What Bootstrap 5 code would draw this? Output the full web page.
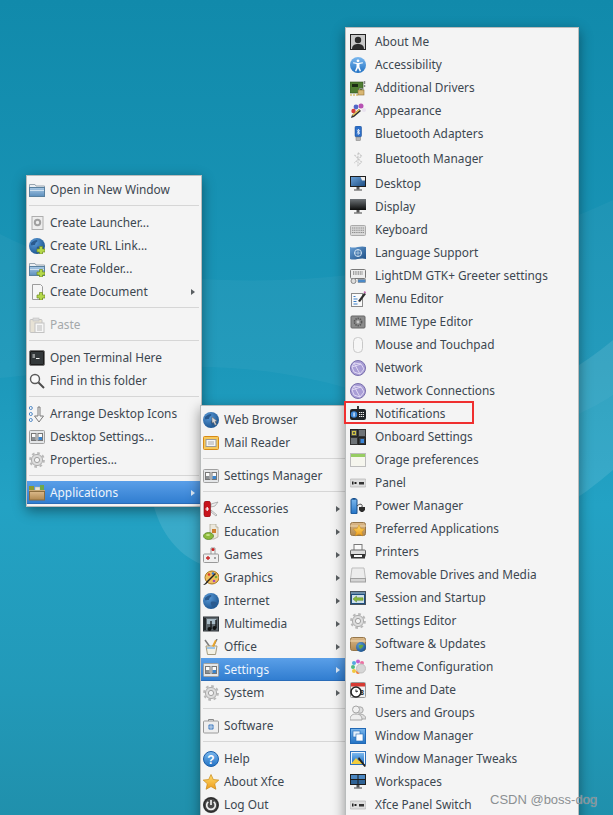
<!DOCTYPE html>
<html lang="en">
<head>
<meta charset="utf-8">
<title>Xfce desktop menu</title>
<link href="https://cdn.jsdelivr.net/npm/bootstrap@5.3.0/dist/css/bootstrap.min.css" rel="stylesheet">
<style>
html,body{height:815px;overflow:hidden}
body{margin:0;background:linear-gradient(180deg,#118aab 0,#1c98ba 45%,#23a2c4 62%,#2299b8 85%,#2090ac 100%);font-family:"Noto Sans",sans-serif;font-size:11.85px;color:#3c4750}
.desk{position:relative;width:613px;height:815px;overflow:hidden}
.wall{position:absolute;left:0;top:0}
.win{position:absolute;background:#f4f4f4;border:1px solid #b9bcbc;padding:2px 0;box-shadow:0 4px 12px rgba(0,0,0,.42)}
.w1{left:26px;top:175px;width:176px;z-index:1;--lead:2px;--gap:5px;--tail:6px}
.w2{left:200px;top:405px;width:148px;height:430px;z-index:2;--lead:2px;--gap:5px;--tail:7px}
.w3{left:345px;top:27px;width:234px;height:810px;z-index:3;--lead:4px;--gap:9px;--tail:7px}
.ent{height:23px;padding-left:var(--lead);padding-right:var(--tail);white-space:nowrap;position:relative}
.ent.tall{height:27px}
.ent svg{width:16px;height:16px;flex:none;overflow:visible;margin-right:var(--gap)}
.ent.off{color:#a4a8aa}
.ent.off svg{opacity:.45}
.ent.sel{background:linear-gradient(180deg,#5a9fe8,#2f7ccf);color:#eef5fc;box-shadow:inset 0 -1px #2a6cb8}
.arw{width:0;height:0;border-left:4px solid #5a5f62;border-top:3px solid transparent;border-bottom:3px solid transparent}
.sel .arw{border-left-color:#dce9f7}
.rule{height:1px;background:#d6d6d6;margin:4px 2px 5px 2px}
.mark-box{position:absolute;left:-2px;top:-1px;width:130px;height:23px;border:2px solid #ef2f2f;pointer-events:none}
.stamp{position:absolute;left:490px;top:790px;z-index:5;font-family:"Liberation Sans",sans-serif;font-size:13px;color:#8b8f92;text-shadow:0 0 1px rgba(255,255,255,.45);white-space:nowrap}
.defs{width:0;height:0;display:block}
</style>
</head>
<body>
<svg class="defs" xmlns="http://www.w3.org/2000/svg">
<defs>
<linearGradient id="gb" x1="0" y1="0" x2="0" y2="1"><stop offset="0" stop-color="#a9c8e4"/><stop offset="1" stop-color="#5d8fbd"/></linearGradient>
<radialGradient id="gg" cx=".35" cy=".3" r=".8"><stop offset="0" stop-color="#5b9bd8"/><stop offset="1" stop-color="#174f8a"/></radialGradient>
<linearGradient id="gs" x1="0" y1="0" x2="0" y2="1"><stop offset="0" stop-color="#e2e2e2"/><stop offset="1" stop-color="#b4b4b4"/></linearGradient>
<linearGradient id="gm" x1="0" y1="0" x2="0" y2="1"><stop offset="0" stop-color="#6f7478"/><stop offset="1" stop-color="#0c0c0c"/></linearGradient>
<linearGradient id="gd" x1="0" y1="0" x2="1" y2="1"><stop offset="0" stop-color="#6aa0d6"/><stop offset="1" stop-color="#1e4f85"/></linearGradient>
<linearGradient id="gh" x1="0" y1="0" x2="0" y2="1"><stop offset="0" stop-color="#7bb8ee"/><stop offset="1" stop-color="#2272c4"/></linearGradient>
<linearGradient id="gt" x1="0" y1="0" x2="0" y2="1"><stop offset="0" stop-color="#dbb98a"/><stop offset="1" stop-color="#b08850"/></linearGradient>
<linearGradient id="gy" x1="0" y1="0" x2="0" y2="1"><stop offset="0" stop-color="#ffdc6a"/><stop offset="1" stop-color="#ee9c1d"/></linearGradient>
<symbol id="plus" viewBox="0 0 16 16"><path d="M10.500 8.500h3v2.500H16v3h-2.500V16h-3v-2H8v-3h2.500z" fill="#b4d84a" stroke="#6d8a22" stroke-width=".7"/></symbol>
<symbol id="folder" viewBox="0 0 16 16"><path d="M.5 2.500h5.500l1 1.500h8.500v2H.5z" fill="#eceff2" stroke="#98a5b0"/><rect x=".5" y="5.500" width="15" height="9" fill="url(#gb)" stroke="#59809f"/><rect x="1" y="8" width="14" height="1" fill="#cfe0ef"/></symbol>
<symbol id="launch" viewBox="0 0 16 16"><rect x="3" y="1.500" width="11" height="13" fill="#ededed" stroke="#aeaeae"/><circle cx="8.500" cy="7.500" r="2.700" fill="none" stroke="#a0a0a0" stroke-width="2"/></symbol>
<symbol id="globe" viewBox="0 0 16 16"><circle cx="8" cy="8" r="8" fill="url(#gg)"/><path d="M2 5c2-2 4-3 6-3 1 1 0 2-1 2.500S7 7 5 7 3 8 2 7zM8 9c2-1 5 0 6 1-1 2-3 4-5 4 0-2-2-3-1-5z" fill="#2a5a8e"/></symbol>
<symbol id="doc" viewBox="0 0 16 16"><path d="M3.500 .5h8l2 2v13h-10z" fill="#f6f6f6" stroke="#9d9d9d"/></symbol>
<symbol id="paste" viewBox="0 0 16 16"><rect x="1" y="2.500" width="12" height="13" rx="1" fill="#d8cdb0" stroke="#888"/><rect x="4" y="1" width="6" height="3" fill="#bbb" stroke="#888" stroke-width=".6"/><rect x="6" y="6" width="9" height="9.500" fill="#fafafa" stroke="#888"/><path d="M8 9h5M8 11h5M8 13h5" stroke="#777"/></symbol>
<symbol id="term" viewBox="0 0 16 16"><rect x=".5" y=".5" width="15" height="15" rx="1.500" fill="#1c1c1c" stroke="#777"/><rect x="2" y="2" width="12" height="12" fill="#33383a"/><path d="M3.500 5h2.500M3.500 7h2.500M7 8.500h3.500" stroke="#eee" stroke-width="1.100"/></symbol>
<symbol id="find" viewBox="0 0 16 16"><circle cx="6" cy="6" r="4.500" fill="#fafafa" stroke="#5a5a5a" stroke-width="1.400"/><path d="M9.500 9.500l5.500 5.500" stroke="#4b4b4b" stroke-width="1.900"/></symbol>
<symbol id="arrange" viewBox="0 0 16 16"><circle cx="1.800" cy="2" r="1.500" fill="#fff" stroke="#4d86c4"/><circle cx="1.800" cy="8" r="1.500" fill="#fff" stroke="#4d86c4"/><circle cx="1.800" cy="14" r="1.500" fill="#fff" stroke="#4d86c4"/><path d="M9 1h2v9h3.500l-4.500 6-4.500-6H9z" fill="#f4f4f4" stroke="#7b7b7b"/></symbol>
<symbol id="settings" viewBox="0 0 16 16"><rect x=".5" y="1.500" width="15" height="13" rx="1" fill="#e4e6e8" stroke="#a0a0a0"/><rect x="2.500" y="4.500" width="4.500" height="7" fill="#fafafa" stroke="#777"/><rect x="9" y="4.500" width="4.500" height="7" fill="#fafafa" stroke="#777"/><rect x="3" y="8" width="3.500" height="3" fill="#8a8f93"/><rect x="9.500" y="8" width="3.500" height="3" fill="#3d85cc"/></symbol>
<symbol id="gear" viewBox="0 0 16 16"><circle cx="8" cy="8" r="6.900" fill="none" stroke="#b9b9b9" stroke-width="2" stroke-dasharray="2.700 2.720"/><circle cx="8" cy="8" r="5.600" fill="#dcdcdc" stroke="#adadad"/><circle cx="8" cy="8" r="2.600" fill="#f4f4f4" stroke="#a0a0a0"/></symbol>
<symbol id="apps" viewBox="0 0 16 16"><rect x="0" y="1" width="5" height="5" fill="#8d9a2e"/><rect x="6" y="2" width="5" height="4" fill="#e8e3d0" stroke="#aaa" stroke-width=".5"/><rect x="11" y="0" width="4" height="6" fill="#6fa84a"/><path d="M0 5h16v2H0z" fill="#c7a875"/><rect x=".5" y="6.500" width="15" height="8.500" fill="url(#gt)" stroke="#8c6d3e"/></symbol>
<symbol id="mail" viewBox="0 0 16 16"><rect x=".5" y="1.500" width="15" height="13" rx="1" fill="#f7c95b" stroke="#d68a17"/><rect x="3" y="4.500" width="10" height="7" fill="#f6f6f6" stroke="#9a9a9a"/><path d="M5 7h6M5 9h6" stroke="#aaa"/></symbol>
<symbol id="knife" viewBox="0 0 16 16"><path d="M8 3l7-2-3 4-4 1zM8 9l6 5-1 1-5-4z" fill="#eee" stroke="#9a9a9a" stroke-width=".7"/><rect x="1" y="0" width="6.500" height="16" rx="2.500" fill="#c8141c" stroke="#7d0b10" stroke-width=".6"/><path d="M4.200 6v4M2.400 8h3.600" stroke="#fff" stroke-width="1.200"/></symbol>
<symbol id="edu" viewBox="0 0 16 16"><path d="M7 0h6v3l2 0v10l-4 2H7z" fill="#ece8dc" stroke="#a6a08e" stroke-width=".7"/><rect x="9" y="5" width="4" height="4" fill="#cf7f30"/><ellipse cx="5.500" cy="12" rx="5" ry="3.500" fill="#8dbb3c" stroke="#4d7a20" stroke-width=".7"/><ellipse cx="5" cy="11" rx="2" ry="1" fill="#c8e48a"/></symbol>
<symbol id="games" viewBox="0 0 16 16"><path d="M8 7V1h4v6" fill="#f5f5f5" stroke="#999"/><rect x=".5" y="7" width="15" height="8.500" rx="1" fill="#efefef" stroke="#999"/><circle cx="10" cy="2.500" r="1.500" fill="#cc1f1f"/><path d="M3 11h4M5 9v4" stroke="#c72525" stroke-width="1.300"/><circle cx="12" cy="11" r="1" fill="#888"/></symbol>
<symbol id="graph" viewBox="0 0 16 16"><ellipse cx="9" cy="7.500" rx="7" ry="6.500" fill="#f0bf5d" stroke="#a8771f"/><circle cx="6" cy="4.500" r="1.300" fill="#d83a2c"/><circle cx="10" cy="3.500" r="1.300" fill="#3a7ed0"/><circle cx="13" cy="7" r="1.300" fill="#74b03b"/><circle cx="11" cy="11" r="1.300" fill="#a04bb8"/><path d="M0 15c2-1 3-3 4-4l8-8 1 1-8 8c-1 1-2 3-5 3z" fill="#222"/></symbol>
<symbol id="media" viewBox="0 0 16 16"><rect x=".5" y="1" width="15" height="14" fill="#5f686e" stroke="#2e3236"/><rect x="1" y="2" width="2" height="12" fill="#24282b"/><rect x="4" y="3" width="9" height="5" fill="#a9bbc6"/><path d="M8 5v8" stroke="#111" stroke-width="1.300"/><circle cx="6.500" cy="13" r="2" fill="#111"/><path d="M13 4v8" stroke="#111" stroke-width="1.300"/><circle cx="11.500" cy="12" r="2" fill="#111"/></symbol>
<symbol id="office" viewBox="0 0 16 16"><path d="M2 1l5 7M14 0l-4 8" stroke="#7b7b7b" stroke-width="1.500"/><path d="M3 7h11l-1.500 8.500h-8z" fill="#f4f1e4" stroke="#a39b80"/><path d="M9 7l3-6 1.500.5L11 8z" fill="#e9a52b"/><path d="M4 9l8 0" stroke="#9ec6e8" stroke-width="2"/></symbol>
<symbol id="bag" viewBox="0 0 16 16"><path d="M5.500 3V1.500h5V3" fill="none" stroke="#8a8a8a"/><rect x=".5" y="3" width="15" height="12" rx="1" fill="#eeeeee" stroke="#9a9a9a"/><circle cx="8" cy="9" r="3" fill="#5f8fc8"/><path d="M5 9h6M8 6v6" stroke="#dfe9f3" stroke-width=".7"/></symbol>
<symbol id="help" viewBox="0 0 16 16"><circle cx="8" cy="8" r="7.500" fill="url(#gh)" stroke="#1b5ea8"/><text x="8" y="12.500" text-anchor="middle" font-family="Liberation Sans" font-size="12" font-weight="700" fill="#fff">?</text></symbol>
<symbol id="star" viewBox="0 0 16 16"><path d="M8 .5l2.300 5 5.500.6-4.100 3.700 1.200 5.500L8 12.500l-4.900 2.800 1.200-5.500L.2 6.100l5.500-.6z" fill="url(#gy)" stroke="#c98a17" stroke-width=".7"/></symbol>
<symbol id="power" viewBox="0 0 16 16"><circle cx="8" cy="8" r="8" fill="#4a4a4a"/><circle cx="8" cy="8" r="7" fill="none" stroke="#222"/><path d="M5.300 4.800a4.300 4.300 0 1 0 5.400 0" fill="none" stroke="#efefef" stroke-width="1.700"/><path d="M8 3v5" stroke="#efefef" stroke-width="1.700"/></symbol>
<symbol id="me" viewBox="0 0 16 16"><rect x=".5" y=".5" width="15" height="15" fill="#c9c9c9" stroke="#222"/><circle cx="8" cy="6" r="3.200" fill="#2b2b2b"/><path d="M2 15c0-4 3-5 6-5s6 1 6 5z" fill="#2b2b2b"/></symbol>
<symbol id="acc" viewBox="0 0 16 16"><circle cx="8" cy="8" r="8" fill="url(#gh)"/><circle cx="8" cy="3.800" r="1.400" fill="#fff"/><path d="M3 6.200l3.500.8v3l-1.500 4 1.200.4L8 11l1.800 3.400 1.200-.4-1.500-4V7l3.500-.8-.3-1L8 6 3.300 5.200z" fill="#fff"/></symbol>
<symbol id="drv" viewBox="0 0 16 16"><rect x="0" y="2" width="13" height="11" fill="#4e7c32" stroke="#2f4f1d" stroke-width=".6"/><rect x="2" y="4" width="6" height="3" fill="#1b2b14"/><path d="M1 14v2M4 14v2M7 14v2" stroke="#c8a431"/><path d="M14.500 1v3M14.500 5v2" stroke="#888" stroke-width="1.500"/><rect x="8" y="10" width="6" height="5" fill="#d9b773" stroke="#8f7438" stroke-width=".6"/><path d="M9.500 10V8.500h3V10" fill="none" stroke="#8f8f8f"/></symbol>
<symbol id="appear" viewBox="0 0 16 16"><circle cx="6" cy="4" r="2.400" fill="#5267c8"/><circle cx="11" cy="3" r="2.500" fill="#b752b3"/><circle cx="14" cy="7" r="2" fill="#e9e2ef"/><circle cx="3.500" cy="8" r="2.200" fill="#d63a3a"/><path d="M1 15l1-3 7-6 2 2-7 6z" fill="#2f2f2f"/><path d="M2 12l7-6 1 1-7 6z" fill="#ecc85a"/></symbol>
<symbol id="bta" viewBox="0 0 16 16"><rect x="5" y="0" width="6.500" height="11" rx="1.500" fill="#2c6ec8" stroke="#17488c" stroke-width=".5"/><path d="M6.800 3.200l3 2.800-1.500 1.500V2.200l1.500 1.500-3 2.800" fill="none" stroke="#fff" stroke-width=".8" transform="translate(0 1)"/><rect x="6" y="11" width="4.500" height="3.500" fill="#b5b5b5" stroke="#777" stroke-width=".5"/></symbol>
<symbol id="btm" viewBox="0 0 16 16"><path d="M4.500 4l7 7L8 14.500V1.500L11.500 5l-7 7" fill="none" stroke="#c6c6c6" stroke-width="1.100" stroke-dasharray="2 .8"/></symbol>
<symbol id="desk" viewBox="0 0 16 16"><rect x="0" y="0" width="16" height="11" fill="#1e1e1e"/><rect x="1" y="1" width="14" height="9" fill="url(#gd)"/><path d="M10.500 1h4.500v3.500h-3z" fill="#eee"/><rect x="6.500" y="11" width="3" height="2.500" fill="#555"/><rect x="4" y="13.500" width="8" height="1" fill="#444"/></symbol>
<symbol id="disp" viewBox="0 0 16 16"><rect x="0" y="0" width="16" height="11" fill="url(#gm)"/><rect x="6.500" y="11" width="3" height="2.500" fill="#555"/><rect x="4" y="13.500" width="8" height="1" fill="#444"/></symbol>
<symbol id="kbd" viewBox="0 0 16 16"><rect x=".5" y="3.500" width="15" height="10" rx="1" fill="#d8d8d8" stroke="#aaa"/><path d="M2 6h12M2 8.200h12M2 10.500h12" stroke="#8f8f8f" stroke-width="1.100" stroke-dasharray="1.200 .6"/></symbol>
<symbol id="lang" viewBox="0 0 16 16"><path d="M0 2c5 2 10-2 16 0v12c-6-2-11 2-16 0z" fill="url(#gd)"/><ellipse cx="8" cy="8" rx="3.500" ry="3.500" fill="none" stroke="#d4e4f2"/><path d="M4.500 8h7M8 4.500v7" stroke="#d4e4f2" stroke-width=".6"/></symbol>
<symbol id="ldm" viewBox="0 0 16 16"><rect x=".5" y="1.500" width="15" height="9" rx="1" fill="#ededed" stroke="#787878"/><path d="M3 4h10M3 6h10" stroke="#555" stroke-width="1.100" stroke-dasharray="1 .7"/><circle cx="3.500" cy="13" r="2.500" fill="#dedede" stroke="#888"/><rect x="8" y="11.500" width="7.500" height="3" fill="#4a89c8" stroke="#777" stroke-width=".5"/></symbol>
<symbol id="medit" viewBox="0 0 16 16"><rect x="1.500" y="2.500" width="11" height="13" fill="#fafafa" stroke="#8a8a8a"/><path d="M3.500 5.500h2M3.500 8h4M3.500 10.500h3M3.500 13h4" stroke="#3b7ec8" stroke-width="1.200"/><path d="M8 10l6-8 2 1-6 8z" fill="#2d2d2d"/><path d="M13.500 1.500l2 1 .5-1.500-1.500-1z" fill="#c267b0"/></symbol>
<symbol id="mime" viewBox="0 0 16 16"><rect x="1" y="2" width="14" height="12" rx="1" fill="#8c8c8c" stroke="#666"/><circle cx="8" cy="8" r="3.600" fill="none" stroke="#555" stroke-width="1.600" stroke-dasharray="1.400 .9"/><circle cx="8" cy="8" r="1.400" fill="#c7c7c7"/></symbol>
<symbol id="mouse" viewBox="0 0 16 16"><rect x="3.500" y=".5" width="9" height="15" rx="4" fill="#f6f6f6" stroke="#c8c8c8"/></symbol>
<symbol id="net" viewBox="0 0 16 16"><circle cx="8" cy="8" r="7.500" fill="#a99ed6" stroke="#7a70ad"/><path d="M4 3l7 1 3 5-4 5-6-2-2-5zM4 3l6 11M11 4L2 7" fill="none" stroke="#e4def5" stroke-width=".9"/></symbol>
<symbol id="note" viewBox="0 0 16 16"><rect x="0" y="3" width="16" height="11" rx="2" fill="#202428"/><rect x="7" y="0" width="2" height="3" fill="#3a3a3a"/><circle cx="4" cy="8.500" r="3.200" fill="#3b86d8"/><rect x="3.500" y="6.500" width="1.100" height="4" fill="#fff"/><path d="M9 6.500h5M9 8.500h5M9 10.500h5" stroke="#eaeaea" stroke-width="1" stroke-dasharray="1.400 .6"/></symbol>
<symbol id="onb" viewBox="0 0 16 16"><rect x=".5" y=".5" width="7" height="7" fill="#454a4e" stroke="#222"/><rect x="8.500" y=".5" width="7" height="7" fill="#6e7377" stroke="#333"/><rect x=".5" y="8.500" width="7" height="7" fill="#6e7377" stroke="#333"/><rect x="8.500" y="8.500" width="7" height="7" fill="#343a40" stroke="#222"/><rect x="2.500" y="2.500" width="3" height="3" fill="none" stroke="#d2c446" stroke-width="1.200"/><rect x="10.500" y="10" width="3.500" height="4" fill="#3b86d8"/></symbol>
<symbol id="orage" viewBox="0 0 16 16"><rect x=".5" y="1.500" width="15" height="13" fill="#f6f6ee" stroke="#bdbdbd"/><rect x="1" y="2" width="14" height="3" fill="#97cd63"/></symbol>
<symbol id="panel" viewBox="0 0 16 16"><rect x="0" y="4" width="16" height="8" rx="1" fill="#dedede" stroke="#a8a8a8" stroke-width=".6"/><rect x="2" y="6.500" width="1.500" height="3" fill="#222"/><path d="M6.500 8l-2 0" stroke="#222" stroke-width="2"/><rect x="9" y="7" width="5" height="2.500" fill="#333"/></symbol>
<symbol id="pwr" viewBox="0 0 16 16"><rect x="1" y="1" width="6" height="15" rx="1" fill="url(#gh)" stroke="#164f8c"/><rect x="2.500" y="0" width="3" height="1.500" fill="#164f8c"/><path d="M7 8c3-3 6-2 5 1" fill="none" stroke="#4a4a4a"/><path d="M9 9h6v3l-2 2h-2l-2-2z" fill="#2c2c2c"/></symbol>
<symbol id="pref" viewBox="0 0 16 16"><rect x=".5" y="1.500" width="15" height="13" rx="2" fill="url(#gt)" stroke="#96764a"/><path d="M0 5h16" stroke="#f0d9b2"/><path d="M9 4l1.800 3.600 3.900.5-2.800 2.800.7 3.900L9 13l-3.500 1.800.7-3.900L3.300 8.100l3.900-.5z" fill="url(#gy)" stroke="#cb8c1b" stroke-width=".5"/></symbol>
<symbol id="print" viewBox="0 0 16 16"><rect x="4" y="0.500" width="8" height="6" fill="#fafafa" stroke="#7a7a7a"/><rect x=".5" y="6" width="15" height="6.500" rx="1" fill="#dcdcdc" stroke="#666"/><rect x="1" y="10" width="14" height="4.500" fill="#333"/><rect x="4" y="11" width="8" height="2" fill="#fafafa"/></symbol>
<symbol id="drive" viewBox="0 0 16 16"><path d="M2 1h12l1.500 11H.5z" fill="#ececec" stroke="#bdbdbd"/><rect x=".5" y="11.500" width="15" height="3.500" fill="#d4d4d4" stroke="#9f9f9f"/></symbol>
<symbol id="sess" viewBox="0 0 16 16"><rect x=".5" y="1.500" width="15" height="13" fill="#1f4f7e" stroke="#48535c"/><rect x="1" y="2" width="14" height="2" fill="#6d8faa"/><rect x="2" y="5" width="12" height="8" fill="#cfe0ec"/><path d="M3 9l3.500-3v1.800H13v2.500H6.500V12z" fill="#8abb3e" stroke="#5e8723" stroke-width=".5"/></symbol>
<symbol id="upd" viewBox="0 0 16 16"><rect x=".5" y="1.500" width="15" height="13" rx="2" fill="url(#gt)" stroke="#96764a"/><path d="M0 5h16" stroke="#f0d9b2"/><circle cx="11" cy="11" r="5" fill="url(#gg)"/><path d="M8.500 9.500c2-1 4-1 5 0-1 2-2 3-3.500 3.500-.5-1-1-2-1.500-3.500z" fill="#6aa83f"/></symbol>
<symbol id="theme" viewBox="0 0 16 16"><circle cx="3" cy="8" r="2" fill="#4dbb82"/><circle cx="4" cy="4" r="2" fill="#54a8e0"/><circle cx="8" cy="2.500" r="2" fill="#c25fd0"/><circle cx="12" cy="4" r="2" fill="#ec6fa1"/><circle cx="4" cy="12" r="2" fill="#f1c83d"/><circle cx="8" cy="13" r="2" fill="#ef7f3c"/><circle cx="11" cy="9.500" r="4.500" fill="#d6d6d6" stroke="#c0c0c0"/></symbol>
<symbol id="time" viewBox="0 0 16 16"><rect x=".5" y=".5" width="15" height="15" rx="1" fill="#f1f1f1" stroke="#999"/><rect x="1" y="1" width="14" height="3.500" fill="#d63a32"/><circle cx="6" cy="10" r="5" fill="#fff" stroke="#222" stroke-width="1.600"/><path d="M6 7.500V10l2-1" stroke="#222" fill="none"/><text x="12" y="13" text-anchor="middle" font-family="Liberation Sans" font-size="7" font-weight="700" fill="#222">8</text></symbol>
<symbol id="users" viewBox="0 0 16 16"><circle cx="10" cy="5" r="3.200" fill="#dedede" stroke="#aaa"/><path d="M5 14c0-3 2-5 5-5s6 2 6 5z" fill="#dedede" stroke="#aaa"/><circle cx="6" cy="4.500" r="3.500" fill="#f1f1f1" stroke="#a5a5a5"/><path d="M0 15c0-4 2-6 6-6s6 2 6 6z" fill="#eeeeee" stroke="#a5a5a5"/></symbol>
<symbol id="wm" viewBox="0 0 16 16"><rect x=".5" y=".5" width="15" height="15" fill="url(#gh)" stroke="#2168b4"/><rect x="3" y="3" width="7" height="6" fill="#e5f0fa" stroke="#2168b4" stroke-width=".6"/><rect x="6" y="6" width="7" height="7" fill="#fafcff" stroke="#2168b4" stroke-width=".6"/></symbol>
<symbol id="wmt" viewBox="0 0 16 16"><rect x=".5" y=".5" width="15" height="13" fill="#eef4fb" stroke="#2f72bb"/><rect x="2" y="2" width="12" height="10" fill="url(#gh)"/><path d="M1 13l5-6 3 3 2-1 1 4z" fill="#f3cd3c"/><path d="M9 6l7 9-1.500 1L8 8z" fill="#222"/></symbol>
<symbol id="wksp" viewBox="0 0 16 16"><rect x="0" y="0" width="16" height="11" fill="#1e1e1e"/><rect x="1" y="1" width="6.500" height="4" fill="#4b87c2"/><rect x="8.500" y="1" width="6.500" height="4" fill="#4b87c2"/><rect x="1" y="6" width="6.500" height="4" fill="#2f6396"/><rect x="8.500" y="6" width="6.500" height="4" fill="#2f6396"/><rect x="6.500" y="11" width="3" height="2.500" fill="#555"/><rect x="4" y="13.500" width="8" height="1" fill="#444"/></symbol>
</defs>
</svg>
<div class="desk">
<svg class="wall" width="613" height="815" viewBox="0 0 613 815" xmlns="http://www.w3.org/2000/svg">
<path d="M0 234C40 255 80 265 130 272C260 290 430 285 613 200V395C560 430 500 440 460 425C380 400 330 375 230 368C130 362 60 372 0 378Z" fill="#fff" opacity=".035"/>
<path d="M154 507C165 545 190 565 225 572C330 585 500 570 613 470V340C540 400 440 440 350 440C270 440 190 460 154 507Z" fill="#fff" opacity=".1"/>
</svg>

<div class="win w1">
<div class="ent d-flex align-items-center"><svg><use href="#folder"/></svg><span>Open in New Window</span></div>
<div class="rule"></div>
<div class="ent d-flex align-items-center"><svg><use href="#launch"/></svg><span>Create Launcher...</span></div>
<div class="ent d-flex align-items-center"><svg><use href="#globe"/><use href="#plus"/></svg><span>Create URL Link...</span></div>
<div class="ent d-flex align-items-center"><svg><use href="#folder"/><use href="#plus"/></svg><span>Create Folder...</span></div>
<div class="ent d-flex align-items-center"><svg><use href="#doc"/><use href="#plus"/></svg><span class="flex-grow-1">Create Document</span><i class="arw"></i></div>
<div class="rule"></div>
<div class="ent off d-flex align-items-center"><svg><use href="#paste"/></svg><span>Paste</span></div>
<div class="rule"></div>
<div class="ent d-flex align-items-center"><svg><use href="#term"/></svg><span>Open Terminal Here</span></div>
<div class="ent d-flex align-items-center"><svg><use href="#find"/></svg><span>Find in this folder</span></div>
<div class="rule"></div>
<div class="ent d-flex align-items-center"><svg><use href="#arrange"/></svg><span>Arrange Desktop Icons</span></div>
<div class="ent d-flex align-items-center"><svg><use href="#settings"/></svg><span>Desktop Settings...</span></div>
<div class="ent d-flex align-items-center"><svg><use href="#gear"/></svg><span>Properties...</span></div>
<div class="rule"></div>
<div class="ent sel d-flex align-items-center"><svg><use href="#apps"/></svg><span class="flex-grow-1">Applications</span><i class="arw"></i></div>
</div>

<div class="win w2">
<div class="ent d-flex align-items-center"><svg><use href="#globe"/><path d="M9 5l5 4-2 .5 1.500 3-1.500.7-1.500-3L9 11z" fill="#d8d8d8" stroke="#666" stroke-width=".5"/></svg><span>Web Browser</span></div>
<div class="ent d-flex align-items-center"><svg><use href="#mail"/></svg><span>Mail Reader</span></div>
<div class="rule"></div>
<div class="ent d-flex align-items-center"><svg><use href="#settings"/></svg><span>Settings Manager</span></div>
<div class="rule"></div>
<div class="ent d-flex align-items-center"><svg><use href="#knife"/></svg><span class="flex-grow-1">Accessories</span><i class="arw"></i></div>
<div class="ent d-flex align-items-center"><svg><use href="#edu"/></svg><span class="flex-grow-1">Education</span><i class="arw"></i></div>
<div class="ent d-flex align-items-center"><svg><use href="#games"/></svg><span class="flex-grow-1">Games</span><i class="arw"></i></div>
<div class="ent d-flex align-items-center"><svg><use href="#graph"/></svg><span class="flex-grow-1">Graphics</span><i class="arw"></i></div>
<div class="ent d-flex align-items-center"><svg><use href="#globe"/></svg><span class="flex-grow-1">Internet</span><i class="arw"></i></div>
<div class="ent d-flex align-items-center"><svg><use href="#media"/></svg><span class="flex-grow-1">Multimedia</span><i class="arw"></i></div>
<div class="ent d-flex align-items-center"><svg><use href="#office"/></svg><span class="flex-grow-1">Office</span><i class="arw"></i></div>
<div class="ent sel d-flex align-items-center"><svg><use href="#settings"/></svg><span class="flex-grow-1">Settings</span><i class="arw"></i></div>
<div class="ent d-flex align-items-center"><svg><use href="#gear"/></svg><span class="flex-grow-1">System</span><i class="arw"></i></div>
<div class="rule"></div>
<div class="ent d-flex align-items-center"><svg><use href="#bag"/></svg><span>Software</span></div>
<div class="rule"></div>
<div class="ent d-flex align-items-center"><svg><use href="#help"/></svg><span>Help</span></div>
<div class="ent d-flex align-items-center"><svg><use href="#star"/></svg><span>About Xfce</span></div>
<div class="ent d-flex align-items-center"><svg><use href="#power"/></svg><span>Log Out</span></div>
</div>

<div class="win w3">
<div class="ent d-flex align-items-center"><svg><use href="#me"/></svg><span>About Me</span></div>
<div class="ent d-flex align-items-center"><svg><use href="#acc"/></svg><span>Accessibility</span></div>
<div class="ent d-flex align-items-center"><svg><use href="#drv"/></svg><span>Additional Drivers</span></div>
<div class="ent d-flex align-items-center"><svg><use href="#appear"/></svg><span>Appearance</span></div>
<div class="ent d-flex align-items-center"><svg><use href="#bta"/></svg><span>Bluetooth Adapters</span></div>
<div class="ent tall d-flex align-items-center"><svg><use href="#btm"/></svg><span>Bluetooth Manager</span></div>
<div class="ent d-flex align-items-center"><svg><use href="#desk"/></svg><span>Desktop</span></div>
<div class="ent d-flex align-items-center"><svg><use href="#disp"/></svg><span>Display</span></div>
<div class="ent d-flex align-items-center"><svg><use href="#kbd"/></svg><span>Keyboard</span></div>
<div class="ent d-flex align-items-center"><svg><use href="#lang"/></svg><span>Language Support</span></div>
<div class="ent d-flex align-items-center"><svg><use href="#ldm"/></svg><span>LightDM GTK+ Greeter settings</span></div>
<div class="ent d-flex align-items-center"><svg><use href="#medit"/></svg><span>Menu Editor</span></div>
<div class="ent d-flex align-items-center"><svg><use href="#mime"/></svg><span>MIME Type Editor</span></div>
<div class="ent d-flex align-items-center"><svg><use href="#mouse"/></svg><span>Mouse and Touchpad</span></div>
<div class="ent d-flex align-items-center"><svg><use href="#net"/></svg><span>Network</span></div>
<div class="ent d-flex align-items-center"><svg><use href="#net"/></svg><span>Network Connections</span></div>
<div class="ent d-flex align-items-center"><svg><use href="#note"/></svg><span>Notifications</span><b class="mark-box"></b></div>
<div class="ent d-flex align-items-center"><svg><use href="#onb"/></svg><span>Onboard Settings</span></div>
<div class="ent d-flex align-items-center"><svg><use href="#orage"/></svg><span>Orage preferences</span></div>
<div class="ent d-flex align-items-center"><svg><use href="#panel"/></svg><span>Panel</span></div>
<div class="ent d-flex align-items-center"><svg><use href="#pwr"/></svg><span>Power Manager</span></div>
<div class="ent d-flex align-items-center"><svg><use href="#pref"/></svg><span>Preferred Applications</span></div>
<div class="ent d-flex align-items-center"><svg><use href="#print"/></svg><span>Printers</span></div>
<div class="ent d-flex align-items-center"><svg><use href="#drive"/></svg><span>Removable Drives and Media</span></div>
<div class="ent d-flex align-items-center"><svg><use href="#sess"/></svg><span>Session and Startup</span></div>
<div class="ent d-flex align-items-center"><svg><use href="#gear"/></svg><span>Settings Editor</span></div>
<div class="ent d-flex align-items-center"><svg><use href="#upd"/></svg><span>Software &amp; Updates</span></div>
<div class="ent d-flex align-items-center"><svg><use href="#theme"/></svg><span>Theme Configuration</span></div>
<div class="ent d-flex align-items-center"><svg><use href="#time"/></svg><span>Time and Date</span></div>
<div class="ent d-flex align-items-center"><svg><use href="#users"/></svg><span>Users and Groups</span></div>
<div class="ent d-flex align-items-center"><svg><use href="#wm"/></svg><span>Window Manager</span></div>
<div class="ent d-flex align-items-center"><svg><use href="#wmt"/></svg><span>Window Manager Tweaks</span></div>
<div class="ent d-flex align-items-center"><svg><use href="#wksp"/></svg><span>Workspaces</span></div>
<div class="ent d-flex align-items-center"><svg><use href="#panel"/></svg><span>Xfce Panel Switch</span></div>
</div>
<div class="stamp">CSDN @boss-dog</div>
</div>
<script src="https://cdn.jsdelivr.net/npm/bootstrap@5.3.0/dist/js/bootstrap.bundle.min.js"></script>
</body>
</html>
